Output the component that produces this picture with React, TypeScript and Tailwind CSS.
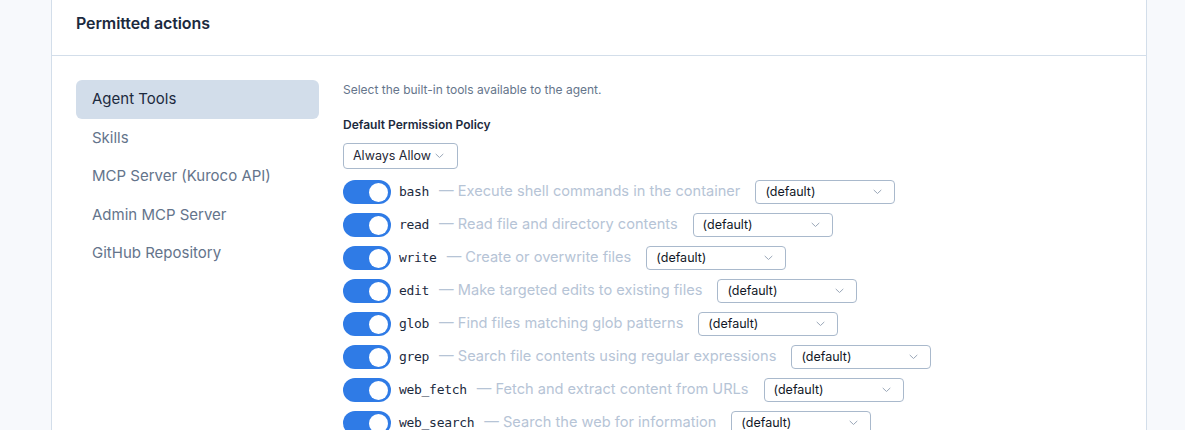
import React from 'react';

const sideItems = ['Agent Tools', 'Skills', 'MCP Server (Kuroco API)', 'Admin MCP Server', 'GitHub Repository'];

const tools = [
  { name: 'bash', desc: 'Execute shell commands in the container' },
  { name: 'read', desc: 'Read file and directory contents' },
  { name: 'write', desc: 'Create or overwrite files' },
  { name: 'edit', desc: 'Make targeted edits to existing files' },
  { name: 'glob', desc: 'Find files matching glob patterns' },
  { name: 'grep', desc: 'Search file contents using regular expressions' },
  { name: 'web_fetch', desc: 'Fetch and extract content from URLs' },
  { name: 'web_search', desc: 'Search the web for information' },
];

function Chevron() {
  return (
    <svg width="9" height="6" viewBox="0 0 9 6" fill="none">
      <path d="M1 1.2L4.5 4.5L8 1.2" stroke="#9aa7b8" strokeWidth="1" strokeLinecap="round" strokeLinejoin="round" />
    </svg>
  );
}

function Toggle() {
  return (
    <div className="w-12 h-6 rounded-full bg-[#2f7be6] flex items-center justify-end pr-[3px] shrink-0">
      <div className="w-[19px] h-[19px] rounded-full bg-white" />
    </div>
  );
}

export default function App() {
  return (
    <div className="w-[1185px] h-[430px] overflow-hidden bg-[#f7f9fc]" style={{ fontFamily: 'Inter, "Noto Sans", sans-serif' }}>
      <div className="ml-[51px] w-[1096px] -mt-[10px] bg-white border border-[#d3deea] h-[460px]">
        {/* Card header */}
        <div className="px-6 py-5 border-b border-[#d3deea]">
          <h2 className="text-[16px] leading-6 font-semibold text-[#1c2a3e] tracking-[-0.1px]">Permitted actions</h2>
        </div>

        <div className="flex gap-6 px-6 pt-6">
          {/* Sidebar */}
          <div className="w-[243px] shrink-0 flex flex-col">
            {sideItems.map((item, i) => (
              <div
                key={item}
                className={
                  i === 0
                    ? 'h-[38.5px] flex items-center px-4 rounded-md bg-[#d2ddea] text-[15px] text-[#1c2a3e]'
                    : 'h-[38.5px] flex items-center px-4 text-[15px] text-[#64748b]'
                }
              >
                {item}
              </div>
            ))}
          </div>

          {/* Content */}
          <div className="flex-1 pt-px">
            <p className="text-[12px] leading-[18px] text-[#65758b]">Select the built-in tools available to the agent.</p>
            <div className="mt-[17px] text-[12px] leading-[18px] font-semibold text-[#1c2a3e]">Default Permission Policy</div>
            <div className="mt-[9px] w-[115px] h-[26px] border border-[#a9b9cc] rounded-[4px] flex items-center justify-between pl-[9px] pr-[13px] text-[12.5px] text-[#1f2937]">
              <span>Always Allow</span>
              <Chevron />
            </div>

            <div className="mt-[11px] flex flex-col gap-[9px]">
              {tools.map((t) => (
                <div key={t.name} className="flex items-center h-6">
                  <Toggle />
                  <span
                    className="ml-2 text-[13px] tracking-[-0.3px] text-[#1c2a3e]"
                    style={{ fontFamily: '"DejaVu Sans Mono", monospace' }}
                  >
                    {t.name}
                  </span>
                  <span className="ml-[10px] text-[14.6px] text-[#b6c4d6]">— {t.desc}</span>
                  <div className="ml-[15px] w-[140px] h-6 border border-[#a9b9cc] rounded-[4px] flex items-center justify-between pl-[9px] pr-[12px] text-[12.5px] text-[#111827]">
                    <span>(default)</span>
                    <Chevron />
                  </div>
                </div>
              ))}
            </div>
          </div>
        </div>
      </div>
    </div>
  );
}
